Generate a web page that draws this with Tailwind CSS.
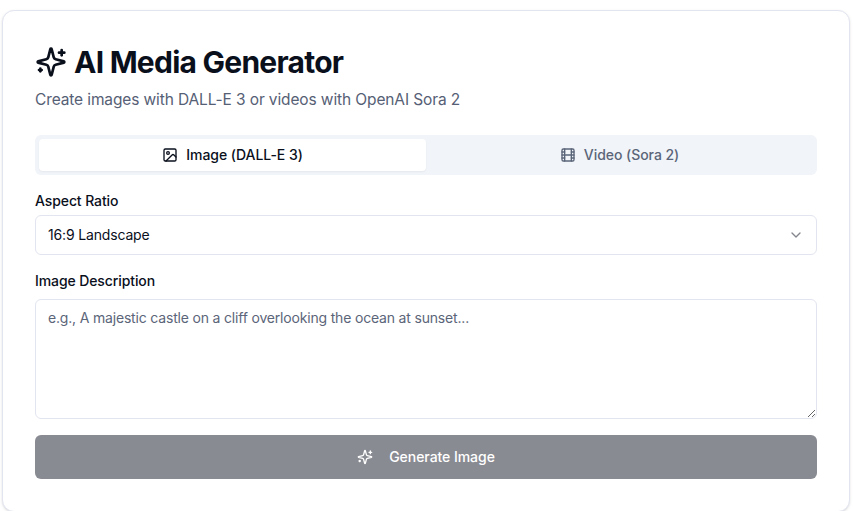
<!DOCTYPE html>
<html lang="en">
<head>
<meta charset="utf-8">
<title>AI Media Generator</title>
<script src="https://cdn.jsdelivr.net/npm/@tailwindcss/browser@4"></script>
</head>
<body class="bg-white font-['Inter',sans-serif] text-[#0a0f1c] h-[511px] overflow-hidden">
<div class="pt-2.5 pl-0.5 pr-[3px] h-[511px]">
  <div class="border border-[#e2e5f0] rounded-xl bg-white shadow-sm px-8 pt-[33px] pb-8 w-[848px]">
    <div class="flex items-center gap-[7px] h-9">
      <svg class="w-8 h-8" viewBox="0 0 24 24" fill="none" stroke="currentColor" stroke-width="2" stroke-linecap="round" stroke-linejoin="round"><path d="M9.937 15.5A2 2 0 0 0 8.5 14.063l-6.135-1.582a.5.5 0 0 1 0-.962L8.5 9.936A2 2 0 0 0 9.937 8.5l1.582-6.135a.5.5 0 0 1 .963 0L14.063 8.5A2 2 0 0 0 15.5 9.937l6.135 1.581a.5.5 0 0 1 0 .964L15.5 14.063a2 2 0 0 0-1.437 1.437l-1.582 6.135a.5.5 0 0 1-.963 0z"/><path d="M20 3v4"/><path d="M22 5h-4"/><path d="M4 17v2"/><path d="M5 18H3"/></svg>
      <h1 class="text-3xl font-bold tracking-tight leading-9">AI Media Generator</h1>
    </div>
    <p class="mt-2 text-[15.5px] tracking-[-0.12px] leading-6 text-[#566075]">Create images with DALL-E 3 or videos with OpenAI Sora 2</p>
    <div class="mt-[23px] h-10 rounded-md bg-[#f1f4f8] p-1 grid grid-cols-2">
      <button class="flex items-center justify-center gap-2 rounded-sm bg-white text-sm font-medium tracking-[-0.05px] shadow-xs">
        <svg class="w-4 h-4" viewBox="0 0 24 24" fill="none" stroke="currentColor" stroke-width="2" stroke-linecap="round" stroke-linejoin="round"><rect width="18" height="18" x="3" y="3" rx="2"/><circle cx="9" cy="9" r="2"/><path d="m21 15-3.086-3.086a2 2 0 0 0-2.828 0L6 21"/></svg>
        Image (DALL-E 3)
      </button>
      <button class="flex items-center justify-center gap-2 rounded-sm text-sm font-medium tracking-[-0.05px] text-[#5b6579]">
        <svg class="w-4 h-4" viewBox="0 0 24 24" fill="none" stroke="currentColor" stroke-width="2" stroke-linecap="round" stroke-linejoin="round"><rect width="18" height="18" x="3" y="3" rx="2"/><path d="M7 3v18"/><path d="M3 7.5h4"/><path d="M3 12h18"/><path d="M3 16.5h4"/><path d="M17 3v18"/><path d="M17 7.5h4"/><path d="M17 16.5h4"/></svg>
        Video (Sora 2)
      </button>
    </div>
    <label class="block mt-4 text-sm font-medium tracking-[-0.1px] leading-5">Aspect Ratio</label>
    <div class="mt-1 h-10 rounded-md border border-[#e2e5f0] bg-white px-3 flex items-center justify-between text-sm tracking-[-0.16px]">
      <span>16:9 Landscape</span>
      <svg class="w-4 h-4 opacity-50" viewBox="0 0 24 24" fill="none" stroke="currentColor" stroke-width="2" stroke-linecap="round" stroke-linejoin="round"><path d="m6 9 6 6 6-6"/></svg>
    </div>
    <label class="block mt-4 text-sm font-medium tracking-[-0.1px] leading-5">Image Description</label>
    <textarea class="block mt-2 w-full h-[120px] rounded-md border border-[#e2e5f0] bg-white px-3 py-2 text-sm tracking-[-0.18px] placeholder:text-[#5b6579] outline-none" placeholder="e.g., A majestic castle on a cliff overlooking the ocean at sunset..."></textarea>
    <button class="mt-4 w-full h-11 rounded-md bg-[#898b92] text-white text-sm font-medium tracking-[-0.05px] flex items-center justify-center">
      <svg class="w-4 h-4 mr-4" viewBox="0 0 24 24" fill="none" stroke="currentColor" stroke-width="2" stroke-linecap="round" stroke-linejoin="round"><path d="M9.937 15.5A2 2 0 0 0 8.5 14.063l-6.135-1.582a.5.5 0 0 1 0-.962L8.5 9.936A2 2 0 0 0 9.937 8.5l1.582-6.135a.5.5 0 0 1 .963 0L14.063 8.5A2 2 0 0 0 15.5 9.937l6.135 1.581a.5.5 0 0 1 0 .964L15.5 14.063a2 2 0 0 0-1.437 1.437l-1.582 6.135a.5.5 0 0 1-.963 0z"/><path d="M20 3v4"/><path d="M22 5h-4"/><path d="M4 17v2"/><path d="M5 18H3"/></svg>
      Generate Image
    </button>
  </div>
</div>
</body>
</html>
